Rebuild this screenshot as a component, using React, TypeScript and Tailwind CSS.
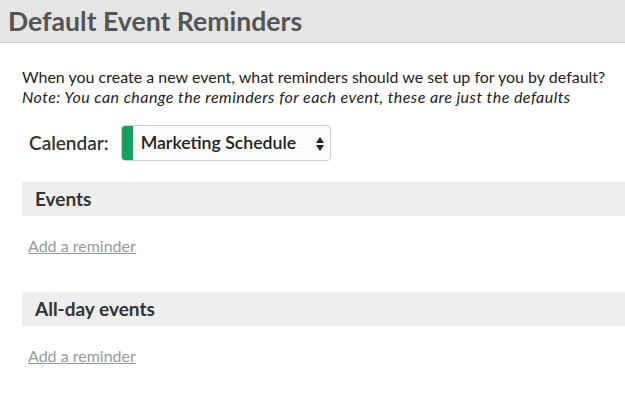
import React from "react";

export default function App() {
  return (
    <div className="w-[625px] h-[400px] bg-white overflow-hidden" style={{ fontFamily: "Lato, 'Open Sans', sans-serif" }}>
      <div className="h-[43px] bg-[#e5e5e5] border-b border-[#cccccc] flex items-center pl-[8px]">
        <h1 className="text-[26.6px] font-bold text-[#555555] leading-none">Default Event Reminders</h1>
      </div>
      <div className="pl-[22px] pt-[24px]">
        <p className="text-[16px] leading-[20px] text-[#222222]">
          When you create a new event, what reminders should we set up for you by default?
          <br />
          <em className="tracking-[0.45px]">Note: You can change the reminders for each event, these are just the defaults</em>
        </p>
        <div className="flex items-center mt-[18px] pl-[7px] gap-[12px]">
          <span className="text-[19px] font-semibold text-[#333333]">Calendar:</span>
          <div className="relative flex items-center w-[210px] h-[36px] border border-[#d0d0d0] rounded-[4px] bg-[#fbfbfb] overflow-hidden">
            <div className="w-[11px] h-full bg-[#16a05e]" />
            <span className="ml-[8px] text-[17.7px] font-semibold text-[#222222]">Marketing Schedule</span>
            <svg className="absolute right-[5px] top-[10px]" width="10" height="16" viewBox="0 0 10 16">
              <path d="M5 1 L9 7 L1 7 Z" fill="#222" />
              <path d="M1 9 L9 9 L5 15 Z" fill="#222" />
            </svg>
          </div>
        </div>
        <div className="mt-[21px] h-[34px] bg-[#eeeeee] flex items-center pl-[13px]">
          <span className="text-[19px] font-bold text-[#333333]">Events</span>
        </div>
        <div className="pl-[6px] pt-[18px] h-[76px]">
          <a className="text-[16px] text-[#999999] underline">Add a reminder</a>
        </div>
        <div className="h-[34px] bg-[#eeeeee] flex items-center pl-[13px]">
          <span className="text-[19px] font-bold text-[#333333]">All-day events</span>
        </div>
        <div className="pl-[6px] pt-[18px]">
          <a className="text-[16px] text-[#999999] underline">Add a reminder</a>
        </div>
      </div>
    </div>
  );
}
